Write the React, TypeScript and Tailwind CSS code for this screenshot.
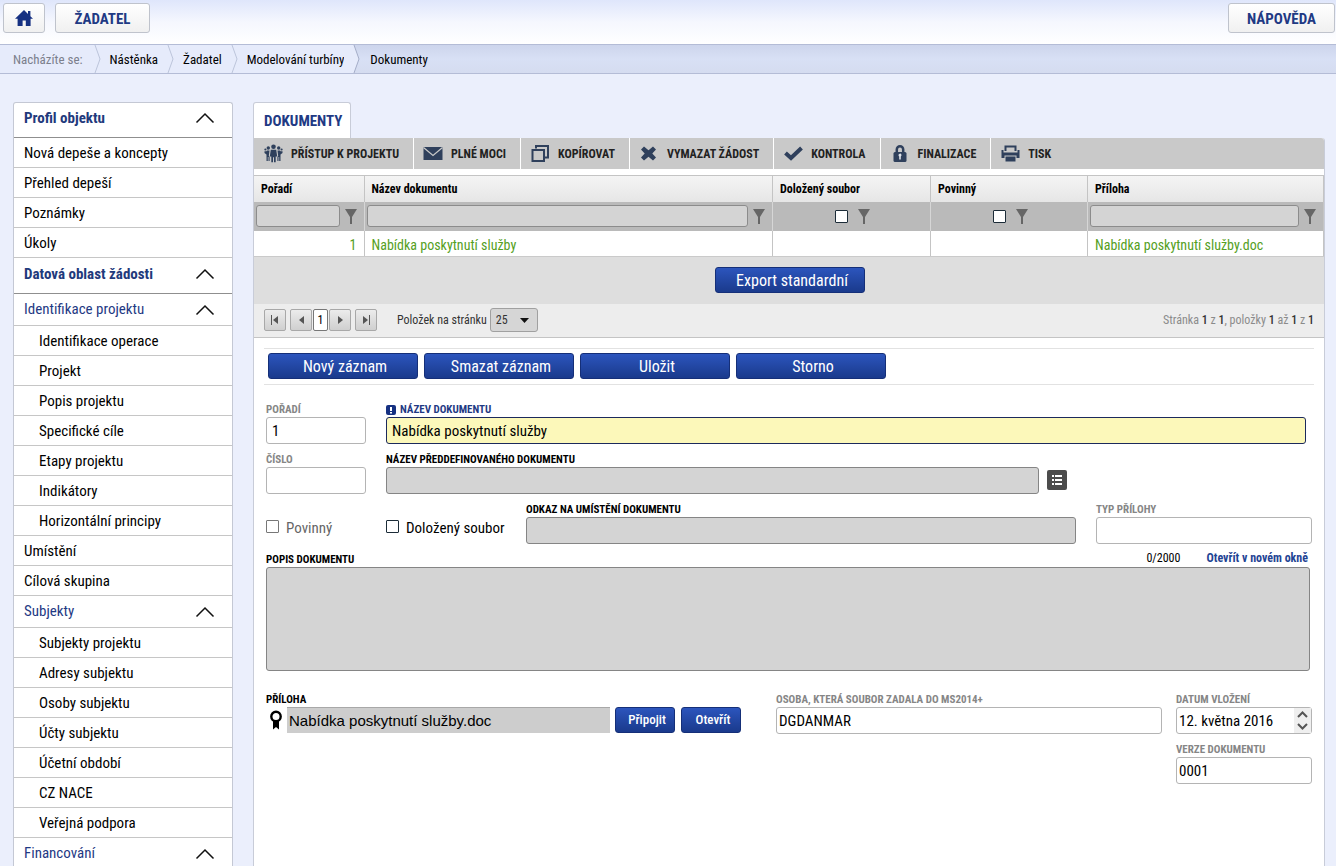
import { useState, type ReactNode } from "react";

type MenuRow = { label: string; kind: "section" | "group" | "item" | "sub" };

const MENU: MenuRow[] = [
  { label: "Profil objektu", kind: "section" },
  { label: "Nová depeše a koncepty", kind: "item" },
  { label: "Přehled depeší", kind: "item" },
  { label: "Poznámky", kind: "item" },
  { label: "Úkoly", kind: "item" },
  { label: "Datová oblast žádosti", kind: "section" },
  { label: "Identifikace projektu", kind: "group" },
  { label: "Identifikace operace", kind: "sub" },
  { label: "Projekt", kind: "sub" },
  { label: "Popis projektu", kind: "sub" },
  { label: "Specifické cíle", kind: "sub" },
  { label: "Etapy projektu", kind: "sub" },
  { label: "Indikátory", kind: "sub" },
  { label: "Horizontální principy", kind: "sub" },
  { label: "Umístění", kind: "item" },
  { label: "Cílová skupina", kind: "item" },
  { label: "Subjekty", kind: "group" },
  { label: "Subjekty projektu", kind: "sub" },
  { label: "Adresy subjektu", kind: "sub" },
  { label: "Osoby subjektu", kind: "sub" },
  { label: "Účty subjektu", kind: "sub" },
  { label: "Účetní období", kind: "sub" },
  { label: "CZ NACE", kind: "sub" },
  { label: "Veřejná podpora", kind: "sub" },
  { label: "Financování", kind: "group" },
];

const CRUMBS = ["Nástěnka", "Žadatel", "Modelování turbíny"];

const TOOLS: { label: string; icon: ReactNode }[] = [
  { label: "PŘÍSTUP K PROJEKTU", icon: <PeopleIcon /> },
  { label: "PLNÉ MOCI", icon: <MailIcon /> },
  { label: "KOPÍROVAT", icon: <CopyIcon /> },
  { label: "VYMAZAT ŽÁDOST", icon: <CrossIcon /> },
  { label: "KONTROLA", icon: <CheckIcon /> },
  { label: "FINALIZACE", icon: <LockIcon /> },
  { label: "TISK", icon: <PrinterIcon /> },
];

const ACTIONS = ["Nový záznam", "Smazat záznam", "Uložit", "Storno"];

export default function App() {
  return (
    <div className="flex min-h-screen flex-col bg-[#ebeffc] font-['Roboto_Condensed','Liberation_Sans_Narrow',Roboto,sans-serif] text-[15px] leading-5 text-black">
      <TopBar />
      <Breadcrumbs />
      <div className="flex flex-1 items-stretch gap-5 pt-7 pr-[11px] pl-[13px]">
        <Sidebar />
        <main className="flex min-w-0 flex-1 flex-col">
          <div className="flex">
            <h1 className="h-9 rounded-t-[3px] border border-b-0 border-[#c8ccd8] bg-white pt-2 pr-[7px] pl-[10px] text-[15px] font-bold text-[#1f3a84]">
              DOKUMENTY
            </h1>
          </div>
          <div className="flex-1 rounded-tr-[3px] border-x border-[#c8ccd8] bg-white">
            <Toolbar />
            <DocumentTable />
            <div className="flex h-12 items-center justify-center border-t border-[#cacaca] bg-[#dedede] pl-[2px]">
              <BlueButton>Export standardní</BlueButton>
            </div>
            <Pager />
            <DetailForm />
          </div>
        </main>
      </div>
    </div>
  );
}

function TopBar() {
  const button =
    "flex h-[30px] items-center justify-center rounded-[3px] border border-[#bfc3cc] bg-gradient-to-b from-white to-[#f0f0f0] text-[15px] font-bold text-[#1f3a84]";
  return (
    <header className="flex h-11 items-start gap-[10px] bg-gradient-to-b from-[#dfe6fb] via-[#f5f7fe] to-white pt-[3px] pr-px pl-[3px]">
      <button type="button" aria-label="Domů" className={`${button} w-[42px]`}>
        <svg width="18" height="18" viewBox="0 0 18 18" fill="#163182">
          <path d="M9 1 13 5V2h2.4v5.2L18 9.800H15.600V17H10.800V11.500H7.600V17H2.600V9.800H0Z" />
        </svg>
      </button>
      <button type="button" className={`${button} w-[95px] pt-px`}>
        ŽADATEL
      </button>
      <button type="button" className={`${button} ml-auto w-[107px] pt-px`}>
        NÁPOVĚDA
      </button>
    </header>
  );
}

function Breadcrumbs() {
  return (
    <nav
      aria-label="Drobečková navigace"
      className="flex h-[30px] items-stretch border-y border-[#b4bcd6] bg-gradient-to-b from-[#cdd5ec] via-[#d8e0f5] to-[#d5dcf0] text-[13px] leading-[30px]"
    >
      <span className="bg-[#e6ebfb] pr-[2px] pl-[13px] text-[#7b7f8c]">Nacházíte se:</span>
      {CRUMBS.map((crumb) => (
        <span key={crumb} className="flex bg-[#e6ebfb]">
          <Chevron />
          <a href="#" className="pl-[5px]">
            {crumb}
          </a>
        </span>
      ))}
      <Chevron last />
      <a href="#" className="pl-[6px]">
        Dokumenty
      </a>
    </nav>
  );
}

function Chevron({ last }: { last?: boolean }) {
  return (
    <svg width="20" height="28" viewBox="0 0 20 28" className="shrink-0" fill="none">
      {last && <path d="M0 0H10L15 14 10 28H0Z" fill="#e6ebfb" />}
      <path d="M10 0 15 14 10 28" stroke={last ? "#a4adc8" : "#bcc4da"} />
    </svg>
  );
}

function Sidebar() {
  return (
    <aside className="w-[220px] shrink-0 rounded-t-[3px] border border-b-0 border-[#c4c8d4] bg-white">
      {MENU.map((row) => {
        if (row.kind === "section") {
          return (
            <button
              key={row.label}
              type="button"
              className="flex h-9 w-full items-center justify-between border-b border-[#8f8f8f] pr-[17px] pb-1 pl-[10px] font-bold text-[#1f3a7c] first:h-[35px]"
            >
              {row.label}
              <CaretUp />
            </button>
          );
        }
        if (row.kind === "group") {
          return (
            <button
              key={row.label}
              type="button"
              className="flex h-8 w-full items-center justify-between border-b border-[#c6c6c6] pr-[17px] pl-[10px] text-[#1f3a84]"
            >
              <span className="pb-[2px]">{row.label}</span>
              <CaretUp />
            </button>
          );
        }
        return (
          <a
            key={row.label}
            href="#"
            className={`flex h-[30px] items-center border-b border-[#c6c6c6] ${
              row.kind === "sub" ? "pl-[25px]" : "pl-[10px]"
            }`}
          >
            {row.label}
          </a>
        );
      })}
    </aside>
  );
}

function CaretUp() {
  return (
    <svg width="20" height="12" viewBox="0 0 20 12" fill="none" stroke="#111" strokeWidth="1.500">
      <path d="M1.500 10.500 10 2l8.500 8.500" />
    </svg>
  );
}

function Toolbar() {
  return (
    <div className="mb-[6px] flex h-[31px] items-stretch rounded-tr-[3px] bg-[#c9c9c9] text-xs font-bold text-[#222]">
      {TOOLS.map((tool) => (
        <button
          key={tool.label}
          type="button"
          className="flex items-center gap-2 border-r border-white pr-[14px] pl-[9px] last:border-r-0"
        >
          <span className="flex w-5 justify-center">{tool.icon}</span>
          {tool.label}
        </button>
      ))}
    </div>
  );
}

function FunnelButton() {
  return (
    <button type="button" aria-label="Filtrovat" className="shrink-0">
      <svg width="12" height="16" viewBox="0 0 12 16" fill="#666" className="block">
        <path d="M0 1h12L7 9v7H5V9Z" />
      </svg>
    </button>
  );
}

function TextFilter({ label }: { label: string }) {
  return (
    <div className="flex items-center gap-[5px] pr-[7px] pl-[2px]">
      <input
        aria-label={label}
        className="h-[22px] w-full min-w-0 rounded-[3px] border border-[#8c8c8c] bg-[#d4d4d4] px-1"
      />
      <FunnelButton />
    </div>
  );
}

function CheckFilter({ label }: { label: string }) {
  return (
    <div className="flex items-center justify-center gap-[10px] pl-[2px]">
      <Tick label={label} />
      <FunnelButton />
    </div>
  );
}

function Tick({ label, id, muted }: { label?: string; id?: string; muted?: boolean }) {
  return (
    <input
      id={id}
      type="checkbox"
      aria-label={label}
      className={`size-[13px] shrink-0 appearance-none rounded-[1px] border bg-white checked:bg-[#1f3a84] ${
        muted ? "border-[#777]" : "border-[#1c2c38]"
      }`}
    />
  );
}

function DocumentTable() {
  const th = "border-r border-[#c4c4c4] pt-px pl-[7px] text-left font-bold";
  const td = "border-r border-[#c4c4c4] px-[7px] pt-[3px]";
  return (
    <table className="w-full table-fixed border-t border-[#c4c4c4]">
      <colgroup>
        <col className="w-[110px]" />
        <col />
        <col className="w-[158px]" />
        <col className="w-[157px]" />
        <col className="w-[236px]" />
      </colgroup>
      <thead>
        <tr className="h-[26px] bg-gradient-to-b from-[#f4f4f4] to-[#e6e6e6] text-xs">
          <th className={th}>Pořadí</th>
          <th className={th}>Název dokumentu</th>
          <th className={th}>Doložený soubor</th>
          <th className={th}>Povinný</th>
          <th className={th}>Příloha</th>
        </tr>
        <tr className="h-[29px] bg-[#bababa]">
          <td className="border-r border-[#d6d6d6]">
            <TextFilter label="Filtr Pořadí" />
          </td>
          <td className="border-r border-[#d6d6d6]">
            <TextFilter label="Filtr Název dokumentu" />
          </td>
          <td className="border-r border-[#d6d6d6]">
            <CheckFilter label="Filtr Doložený soubor" />
          </td>
          <td className="border-r border-[#d6d6d6]">
            <CheckFilter label="Filtr Povinný" />
          </td>
          <td className="border-r border-[#c4c4c4]">
            <TextFilter label="Filtr Příloha" />
          </td>
        </tr>
      </thead>
      <tbody>
        <tr className="h-[25px] bg-white text-sm text-[#55a01e]">
          <td className={`${td} text-right`}>1</td>
          <td className={td}>Nabídka poskytnutí služby</td>
          <td className={td} />
          <td className={td} />
          <td className={td}>Nabídka poskytnutí služby.doc</td>
        </tr>
      </tbody>
    </table>
  );
}

function BlueButton({ children }: { children: ReactNode }) {
  return (
    <button
      type="button"
      className="h-[26px] w-[150px] rounded-[3px] border border-[#152f78] bg-gradient-to-b from-[#2c55bd] to-[#1a3a8c] pt-[2px] pl-1 text-base leading-[22px] text-white"
    >
      {children}
    </button>
  );
}

function SmallBlueButton({ children }: { children: ReactNode }) {
  return (
    <button
      type="button"
      className="h-[26px] w-[60px] shrink-0 rounded-[3px] border border-[#152f78] bg-gradient-to-b from-[#2c55bd] to-[#1a3a8c] pt-px pl-1 text-[13px] font-medium text-white"
    >
      {children}
    </button>
  );
}

function PageButton({ label, path }: { label: string; path: string }) {
  return (
    <button
      type="button"
      aria-label={label}
      className="flex h-[22px] w-[22px] items-center justify-center rounded-[2px] border border-[#a8a8a8] bg-gradient-to-b from-[#ececec] to-[#cfcfcf]"
    >
      <svg width="10" height="10" viewBox="0 0 10 10" fill="#555">
        <path d={path} />
      </svg>
    </button>
  );
}

function Pager() {
  const [size, setSize] = useState("25");
  return (
    <div className="flex h-[34px] items-center border-b border-[#c4c4c4] bg-[#ededed] px-[10px] text-xs text-[#333]">
      <PageButton label="První stránka" path="M1 0h1v10H1ZM8 1v8L3 5Z" />
      <span className="w-1" />
      <PageButton label="Předchozí stránka" path="M8 1v8L3 5Z" />
      <button
        type="button"
        className="mx-px h-[22px] w-[15px] rounded-[2px] border border-[#777] bg-white text-center text-xs text-black"
      >
        1
      </button>
      <PageButton label="Další stránka" path="M3 1v8L8 5Z" />
      <span className="w-1" />
      <PageButton label="Poslední stránka" path="M8 0h1v10H8ZM2 1v8L7 5Z" />
      <label htmlFor="page-size" className="pr-[3px] pl-5">
        Položek na stránku
      </label>
      <span className="relative">
        <select
          id="page-size"
          value={size}
          onChange={(e) => setSize(e.target.value)}
          className="h-6 w-12 appearance-none rounded-[3px] border border-[#a0a0a0] bg-[#d6d6d6] pl-[5px]"
        >
          <option>25</option>
          <option>50</option>
          <option>100</option>
        </select>
        <svg
          className="pointer-events-none absolute top-[10px] right-[9px]"
          width="9"
          height="5"
          viewBox="0 0 9 5"
          fill="#111"
        >
          <path d="M0 0h9L4.500 5Z" />
        </svg>
      </span>
      <p className="ml-auto text-[#8b8b8b]">
        Stránka <b className="font-medium text-[#333]">1</b> z <b className="font-medium text-[#333]">1</b>, položky{" "}
        <b className="font-medium text-[#333]">1</b> až <b className="font-medium text-[#333]">1</b> z{" "}
        <b className="font-medium text-[#333]">1</b>
      </p>
    </div>
  );
}

const labelBase = "flex h-[14px] items-center pt-px text-[11px] leading-[14px] font-bold uppercase";
const inputBase = "h-[27px] w-full min-w-0 rounded-[3px] border pt-px";

function Field({
  id,
  label,
  className,
  value,
  tone = "plain",
  muted,
  required,
  tight,
}: {
  id: string;
  label: string;
  className: string;
  value?: string;
  tone?: "plain" | "grey" | "yellow";
  muted?: boolean;
  required?: boolean;
  tight?: boolean;
}) {
  const look =
    tone === "grey"
      ? "border-[#858585] bg-[#d4d4d4]"
      : tone === "yellow"
      ? "border-[#1c2a5c] bg-[#fcf8ba]"
      : "border-[#b4b4b4] bg-white";
  return (
    <div className={className}>
      <label
        htmlFor={id}
        className={`${labelBase} ${required ? "text-[#1f3a84]" : muted ? "text-[#868686]" : "text-black"}`}
      >
        {required && (
          <svg width="10" height="10" viewBox="0 0 10 10" className="mr-1" aria-hidden="true">
            <rect width="10" height="10" rx="2" fill="#163182" />
            <path d="M4 2h2v4H4ZM4 7h2v1.500H4Z" fill="#fff" />
          </svg>
        )}
        {label}
      </label>
      <input id={id} defaultValue={value} className={`${inputBase} ${look} ${tight ? "px-[2px]" : "px-[5px]"}`} />
    </div>
  );
}

function DetailForm() {
  return (
    <form className="px-3 pb-6" onSubmit={(e) => e.preventDefault()}>
      <div className="-mx-[2px] mt-[10px] flex h-[37px] items-center gap-[6px] border-y border-[#e2e2e2] px-1">
        {ACTIONS.map((action) => (
          <BlueButton key={action}>{action}</BlueButton>
        ))}
      </div>

      <div className="mt-[18px] flex gap-5 pr-[6px]">
        <Field id="poradi" label="Pořadí" value="1" muted className="w-[100px]" />
        <Field
          id="nazev"
          label="Název dokumentu"
          value="Nabídka poskytnutí služby"
          tone="yellow"
          required
          className="flex-1"
        />
      </div>

      <div className="mt-[9px] flex items-end gap-5">
        <Field id="cislo" label="Číslo" muted className="w-[100px]" />
        <div className="flex flex-1 items-end gap-2">
          <Field id="preddef" label="Název předdefinovaného dokumentu" tone="grey" className="flex-1" />
          <button
            type="button"
            aria-label="Vybrat dokument"
            className="mr-[245px] mb-1 flex size-5 items-center justify-center rounded-[2px] bg-[#4c4c4c]"
          >
            <svg width="10" height="10" viewBox="0 0 10 10" fill="#fff">
              <path d="M0 0h2v2H0ZM3 0h7v2H3ZM0 4h2v2H0ZM3 4h7v2H3ZM0 8h2v2H0ZM3 8h7v2H3Z" />
            </svg>
          </button>
        </div>
      </div>

      <div className="mt-[9px] flex items-end">
        <div className="flex h-[34px] w-[120px] items-center gap-[7px] text-[#666]">
          <Tick id="povinny" muted />
          <label htmlFor="povinny" className="pt-[2px]">
            Povinný
          </label>
        </div>
        <div className="flex h-[34px] w-[140px] items-center gap-[7px]">
          <Tick id="dolozeny" />
          <label htmlFor="dolozeny" className="pt-[2px]">
            Doložený soubor
          </label>
        </div>
        <Field id="odkaz" label="Odkaz na umístění dokumentu" tone="grey" className="flex-1" />
        <Field id="typ" label="Typ přílohy" muted className="ml-5 w-[216px]" />
      </div>

      <div className="mt-[9px] mr-[2px]">
        <div className="flex h-[14px] items-center">
          <label htmlFor="popis" className={labelBase}>
            Popis dokumentu
          </label>
          <span className="mb-1 ml-auto text-xs">0/2000</span>
          <a href="#" className="mr-[2px] mb-1 ml-[26px] text-xs font-bold text-[#1f4494]">
            Otevřít v novém okně
          </a>
        </div>
        <textarea
          id="popis"
          className="block h-[104px] w-full resize-none rounded-[3px] border border-[#858585] bg-[#d4d4d4] px-[5px]"
        />
      </div>

      <div className="mt-[22px] flex items-start">
        <div className="min-w-0 flex-1">
          <label htmlFor="priloha" className={labelBase}>
            Příloha
          </label>
          <div className="flex items-center gap-[6px]">
            <SealIcon />
            <input
              id="priloha"
              defaultValue="Nabídka poskytnutí služby.doc"
              className="-mx-px h-[26px] w-full min-w-0 border-t border-[#a8a8a8] bg-[#cdcdcd] px-[2px] font-['Liberation_Sans',Arial,sans-serif]"
            />
            <SmallBlueButton>Připojit</SmallBlueButton>
            <SmallBlueButton>Otevřít</SmallBlueButton>
          </div>
        </div>
        <Field
          id="osoba"
          label="Osoba, která soubor zadala do MS2014+"
          value="DGDANMAR"
          muted
          tight
          className="mr-[14px] ml-[35px] w-[386px]"
        />
        <div className="w-[136px]">
          <label htmlFor="datum" className={`${labelBase} text-[#868686]`}>
            Datum vložení
          </label>
          <div className="flex h-[27px] rounded-[3px] border border-[#b4b4b4]">
            <input id="datum" defaultValue="12. května 2016" className="w-full min-w-0 pt-px pl-[2px]" />
            <span className="flex w-[17px] shrink-0 flex-col items-center justify-center gap-[5px] bg-[#efefef]">
              <button type="button" aria-label="Další den">
                <svg width="11" height="7" viewBox="0 0 11 7" fill="none" stroke="#555" strokeWidth="2" className="block">
                  <path d="M1 6l4.500-4.500L10 6" />
                </svg>
              </button>
              <button type="button" aria-label="Předchozí den">
                <svg width="11" height="7" viewBox="0 0 11 7" fill="none" stroke="#555" strokeWidth="2" className="block">
                  <path d="M1 1l4.500 4.500L10 1" />
                </svg>
              </button>
            </span>
          </div>
          <Field id="verze" label="Verze dokumentu" value="0001" muted tight className="mt-[9px]" />
        </div>
      </div>
    </form>
  );
}

function PeopleIcon() {
  return (
    <svg width="19" height="19" viewBox="0 0 19 19" fill="#2f405c">
      <circle cx="9.500" cy="2.800" r="2.300" />
      <circle cx="4.300" cy="4" r="1.700" />
      <circle cx="14.700" cy="4" r="1.700" />
      <circle cx="1.400" cy="5.500" r="1.100" />
      <circle cx="17.600" cy="5.500" r="1.100" />
      <path d="M6.800 5.800h5.400l1 6.700h-1.500v5.800H10v-5H9v5H7.300v-5.800H5.800Z" />
      <path d="M.5 7.300h2L3 6.500h2.500L4.800 12l.8.800V17H4.500v-4H3.800v4H2.500v-6.500L.5 9Z" />
      <path d="M18.500 7.300h-2L16 6.500h-2.500l.7 5.500-.8.800V17h1.100v-4h.7v4h1.300v-6.500L18.500 9Z" />
    </svg>
  );
}

function MailIcon() {
  return (
    <svg width="20" height="19" viewBox="0 0 20 19">
      <path d="M.5 3h19v13H.5Z" fill="#2f405c" />
      <path d="M.5 3.500 10 11.500l9.500-8" fill="none" stroke="#c9c9c9" strokeWidth="1.200" />
    </svg>
  );
}

function CopyIcon() {
  return (
    <svg width="18" height="19" viewBox="0 0 18 19" fill="none" stroke="#2f405c" strokeWidth="2">
      <path d="M5 4.500V2h12v11.500h-3" />
      <path d="M1.500 6H13v11H1.500Z" />
    </svg>
  );
}

function CrossIcon() {
  return (
    <svg width="17" height="19" viewBox="0 0 17 19" fill="#2f405c">
      <path d="M4 2.500l4.500 3.800L13 2.500l3 3-3.700 4 3.700 4-3 3-4.500-3.800L4 16.500l-3-3 3.700-4-3.700-4Z" />
    </svg>
  );
}

function CheckIcon() {
  return (
    <svg width="19" height="19" viewBox="0 0 19 19" fill="none" stroke="#2f405c" strokeWidth="4">
      <path d="M1.500 9 7 14 17.500 4" />
    </svg>
  );
}

function LockIcon() {
  return (
    <svg width="14" height="19" viewBox="0 0 14 19">
      <path d="M3.800 9V5.500a3.200 3.200 0 0 1 6.400 0V9" fill="none" stroke="#2f405c" strokeWidth="2.500" />
      <rect x="0.500" y="8" width="13" height="10" rx="1.500" fill="#2f405c" />
      <path d="M5.500 11.200a1.500 1.500 0 1 1 2.300 1.200V15.500H6.200V12.400A1.500 1.500 0 0 1 5.500 11.200Z" fill="#dfe3ea" />
    </svg>
  );
}

function PrinterIcon() {
  return (
    <svg width="19" height="19" viewBox="0 0 19 19" fill="#2f405c">
      <path d="M3.500 7V1.500h12V7h-2V3.500h-8V7Z" />
      <path d="M.5 6h2v2.500h14V6h2v8H15.500v-2.500h-12V14H.5Z" />
      <path d="M4.500 12.500h10v5h-10Z" />
    </svg>
  );
}

function SealIcon() {
  return (
    <svg width="16" height="20" viewBox="0 0 16 20" className="shrink-0">
      <circle cx="10" cy="6.500" r="4.700" fill="none" stroke="#000" strokeWidth="2.400" />
      <path d="M7 11h6v8.500l-3-2.500-3 2.500Z" fill="#000" />
    </svg>
  );
}
